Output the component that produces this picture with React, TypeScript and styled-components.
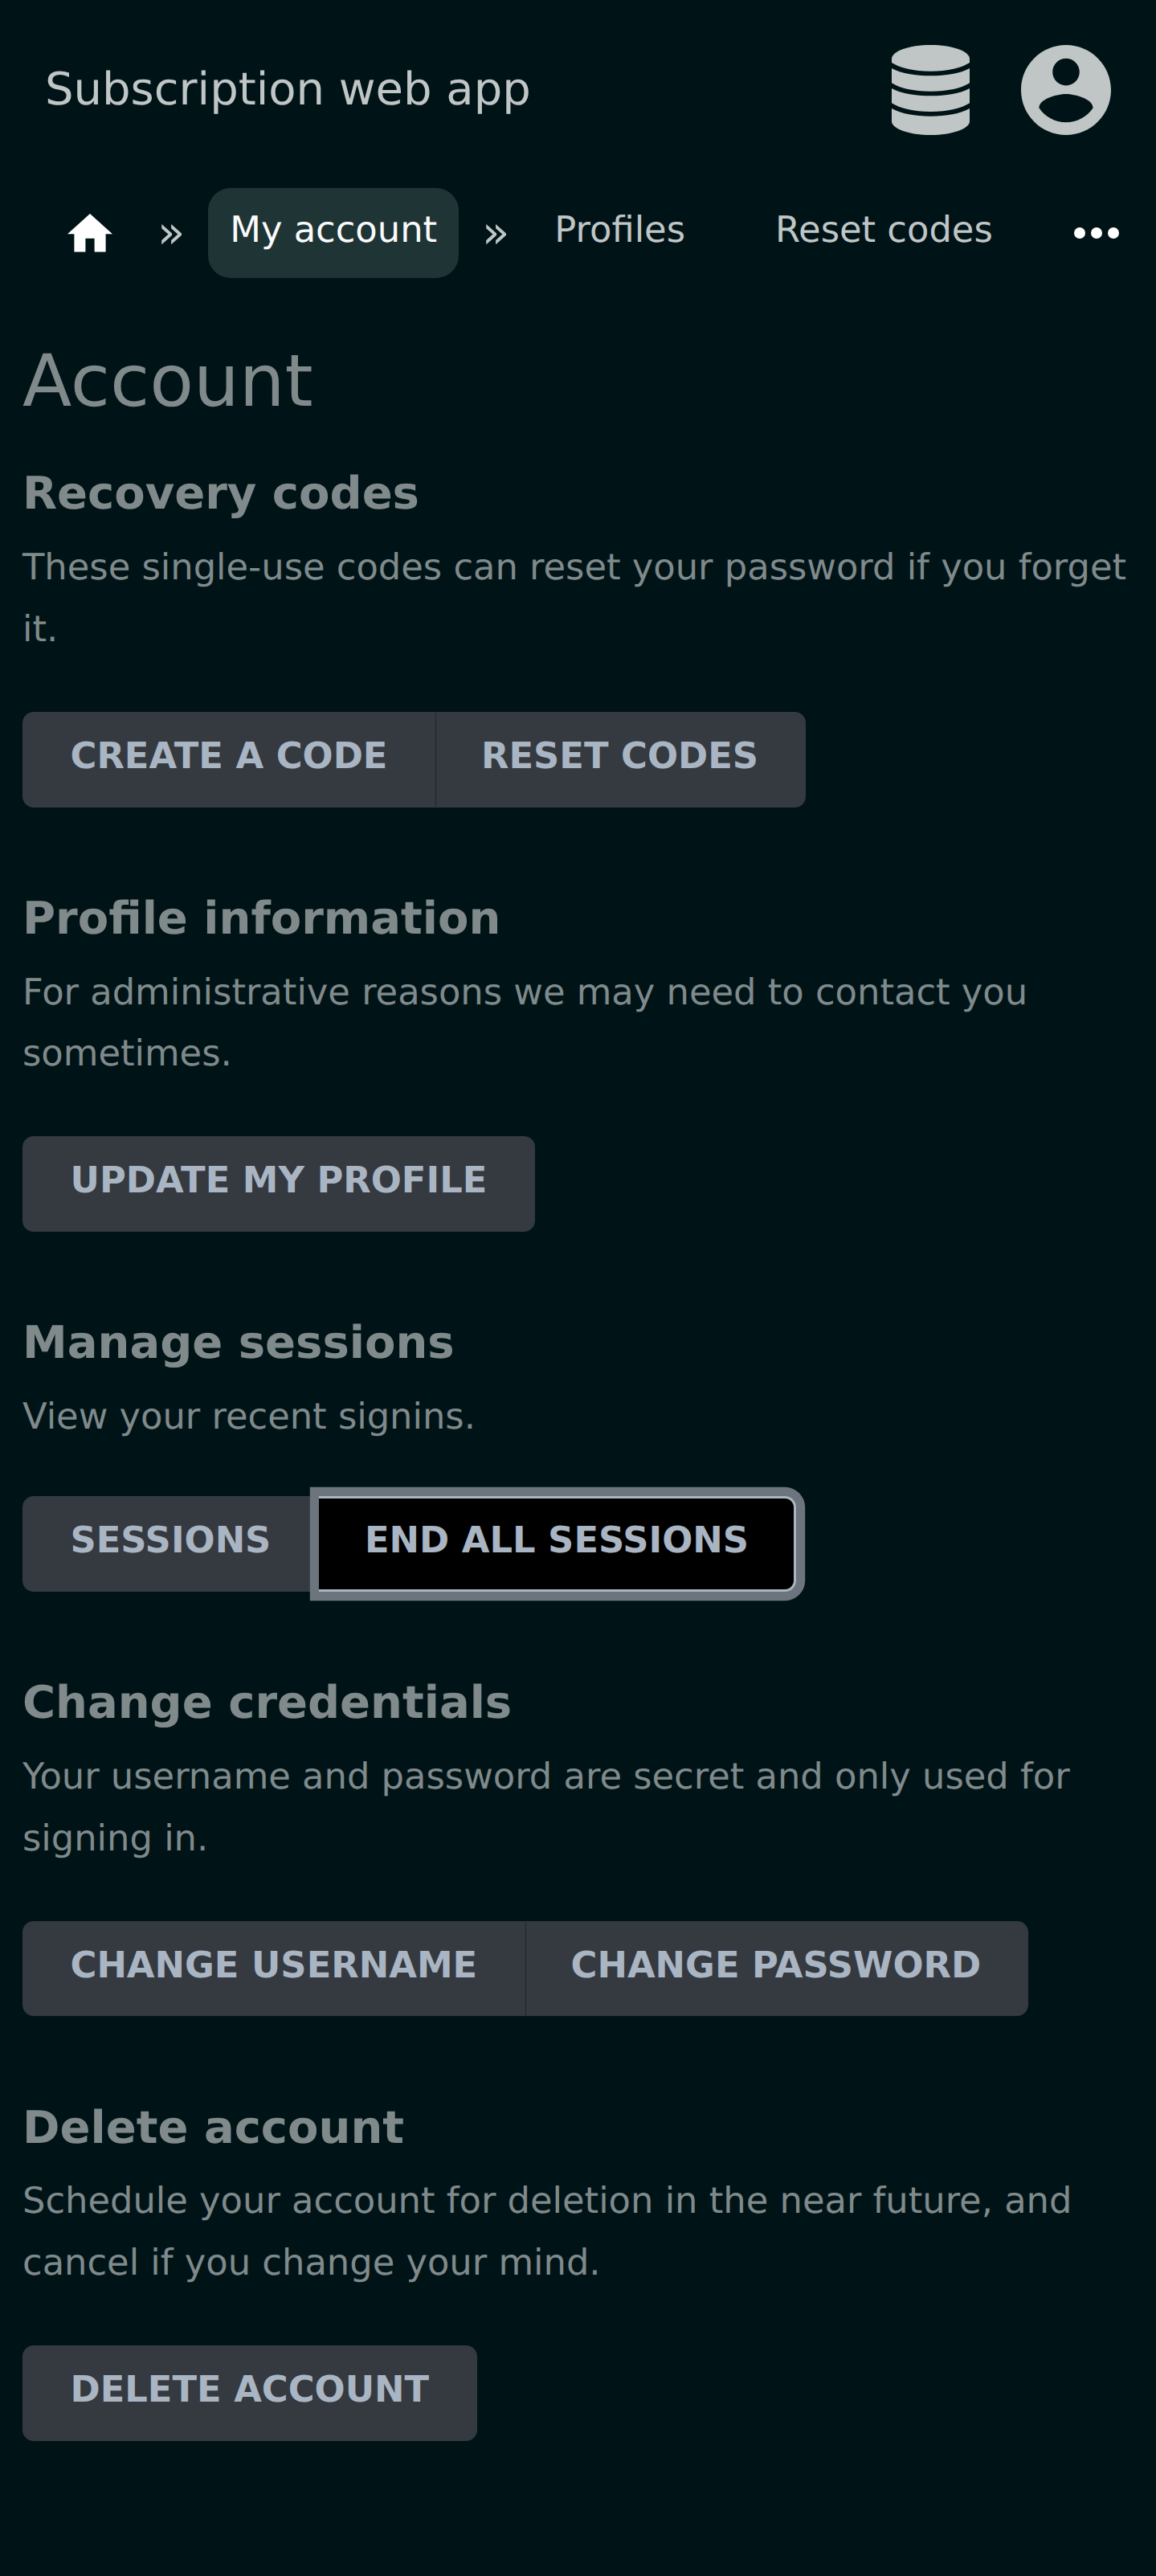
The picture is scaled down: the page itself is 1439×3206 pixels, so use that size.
import React from "react";
import styled, { createGlobalStyle, css } from "styled-components";

const Global = createGlobalStyle`
  *, *::before, *::after { box-sizing: border-box; }
  body {
    margin: 0;
    background: #001418;
    color: #808a8b;
    font-family: "DejaVu Sans", sans-serif;
    font-size: 44.8px;
    line-height: 76.8px;
    text-rendering: geometricPrecision;
  }
`;

const Page = styled.div`
  min-height: 3206px;
  overflow: hidden;
`;

const Header = styled.header`
  display: flex;
  align-items: center;
  justify-content: space-between;
  height: 224px;
  padding: 0 56px;
`;

const Brand = styled.div`
  padding-bottom: 1px;
  color: #c0c6c6;
  font-size: 56px;
  line-height: 96px;
`;

const HeaderIcons = styled.div`
  display: flex;
  gap: 64px;
  color: #c0c6c6;

  svg {
    display: block;
    fill: currentColor;
  }
`;

const Nav = styled.nav`
  display: flex;
  align-items: center;
  height: 112px;
  margin-top: 10px;
  padding: 0 46px 0 56px;
  color: #c0c6c6;
`;

const IconLink = styled.a<{ $end?: boolean }>`
  display: block;
  flex: none;
  padding: ${(p) => (p.$end ? "0" : "0 28px")};
  margin-left: ${(p) => (p.$end ? "auto" : "0")};

  svg {
    display: block;
    fill: #fff;
  }
`;

const Separator = styled.span`
  flex: none;
  padding: 0 28px;
  font-size: 56px;
`;

const Crumb = styled.a<{ $active?: boolean }>`
  flex: none;
  height: 112px;
  margin: 0 0.7px;
  padding: 14px 27.3px 0;
  border-radius: 28px;
  white-space: nowrap;
  ${(p) =>
    p.$active &&
    css`
      background: #1f3535;
      color: #fafafa;
    `}
`;

const CrumbList = styled.div`
  display: flex;
  gap: 56px;
`;

const Main = styled.main`
  padding: 72.6px 28px 0;
`;

const Title = styled.h1`
  margin: 0 0 36.9px;
  font-size: 89.6px;
  font-weight: 400;
  line-height: 112px;
`;

const Section = styled.section`
  margin-bottom: 91.2px;
`;

const Heading = styled.h2`
  margin: 0 0 4.8px;
  font-size: 56px;
  line-height: 96px;
`;

const Text = styled.p<{ $short?: boolean }>`
  margin: 0 0 ${(p) => (p.$short ? 60.8 : 64)}px;
`;

const ButtonGroup = styled.div`
  display: flex;
`;

const Button = styled.button<{ $focused?: boolean }>`
  display: flex;
  align-items: flex-start;
  height: 118.7px;
  padding: 14px 56.5px 0;
  border: 3px solid #353940;
  background: #353940;
  color: #a9b5c2;
  font: bold 44.8px/76.8px "DejaVu Sans", sans-serif;
  text-transform: uppercase;
  white-space: nowrap;

  &:first-child {
    border-top-left-radius: 14px;
    border-bottom-left-radius: 14px;
  }

  &:last-child {
    border-top-right-radius: 14px;
    border-bottom-right-radius: 14px;
  }

  & + & {
    border-left: 1px solid #1c262b;
    padding-left: 56px;
    padding-right: 56px;
  }

  ${(p) =>
    p.$focused &&
    css`
      && {
        position: relative;
        border-color: #a9b5c2;
        border-left: 0;
        padding-left: 57px;
        background: #000;
        box-shadow: 0 0 0 11.2px #6c757d;
      }
    `}
`;

function DatabaseIcon() {
  return (
    <svg width="97" height="112" viewBox="31 33 290 336" preserveAspectRatio="none">
      <path d="M31 85C31 56 96 33 176 33S321 56 321 85V99C290 119 240 131 176 131S62 119 31 99Z" />
      <path d="M31 120C66 139 118 148 176 148S286 139 321 120V175C290 195 240 206 176 206S62 195 31 175Z" />
      <path d="M31 195C66 214 118 223 176 223S286 214 321 195V250C290 270 240 282 176 282S62 270 31 250Z" />
      <path d="M31 270C66 290 118 299 176 299S286 290 321 270V318C321 346 256 369 176 369S31 346 31 318Z" />
    </svg>
  );
}

function AccountIcon() {
  return (
    <svg width="112" height="112" viewBox="2 2 20 20">
      <path d="M12 2C6.48 2 2 6.48 2 12s4.48 10 10 10 10-4.48 10-10S17.52 2 12 2zm0 3c1.66 0 3 1.34 3 3s-1.34 3-3 3-3-1.34-3-3 1.34-3 3-3zm0 14.2c-2.5 0-4.71-1.28-6-3.22.03-1.99 4-3.08 6-3.08 1.99 0 5.97 1.09 6 3.08-1.29 1.94-3.5 3.22-6 3.22z" />
    </svg>
  );
}

function HomeIcon() {
  return (
    <svg width="56" height="47.6" viewBox="2 3 20 17">
      <path d="M10 20v-6h4v6h5v-8h3L12 3 2 12h3v8z" />
    </svg>
  );
}

function MoreIcon() {
  return (
    <svg width="56" height="14" viewBox="4 10 16 4">
      <circle cx="6" cy="12" r="2" />
      <circle cx="12" cy="12" r="2" />
      <circle cx="18" cy="12" r="2" />
    </svg>
  );
}

type Action = { label: string; focused?: boolean };
type AccountSection = { title: string; text: string; short?: boolean; actions: Action[] };

const sections: AccountSection[] = [
  {
    title: "Recovery codes",
    text: "These single-use codes can reset your password if you forget it.",
    actions: [{ label: "Create a code" }, { label: "Reset codes" }],
  },
  {
    title: "Profile information",
    text: "For administrative reasons we may need to contact you sometimes.",
    actions: [{ label: "Update my profile" }],
  },
  {
    title: "Manage sessions",
    text: "View your recent signins.",
    short: true,
    actions: [{ label: "Sessions" }, { label: "End all sessions", focused: true }],
  },
  {
    title: "Change credentials",
    text: "Your username and password are secret and only used for signing in.",
    actions: [{ label: "Change username" }, { label: "Change password" }],
  },
  {
    title: "Delete account",
    text: "Schedule your account for deletion in the near future, and cancel if you change your mind.",
    actions: [{ label: "Delete account" }],
  },
];

export default function App() {
  return (
    <Page>
      <Global />
      <Header>
        <Brand>Subscription web app</Brand>
        <HeaderIcons>
          <DatabaseIcon />
          <AccountIcon />
        </HeaderIcons>
      </Header>
      <Nav>
        <IconLink>
          <HomeIcon />
        </IconLink>
        <Separator>»</Separator>
        <Crumb $active>My account</Crumb>
        <Separator>»</Separator>
        <CrumbList>
          <Crumb>Profiles</Crumb>
          <Crumb>Reset codes</Crumb>
        </CrumbList>
        <IconLink $end>
          <MoreIcon />
        </IconLink>
      </Nav>
      <Main>
        <Title>Account</Title>
        {sections.map((section) => (
          <Section key={section.title}>
            <Heading>{section.title}</Heading>
            <Text $short={section.short}>{section.text}</Text>
            <ButtonGroup>
              {section.actions.map((action) => (
                <Button key={action.label} $focused={action.focused}>
                  {action.label}
                </Button>
              ))}
            </ButtonGroup>
          </Section>
        ))}
      </Main>
    </Page>
  );
}
